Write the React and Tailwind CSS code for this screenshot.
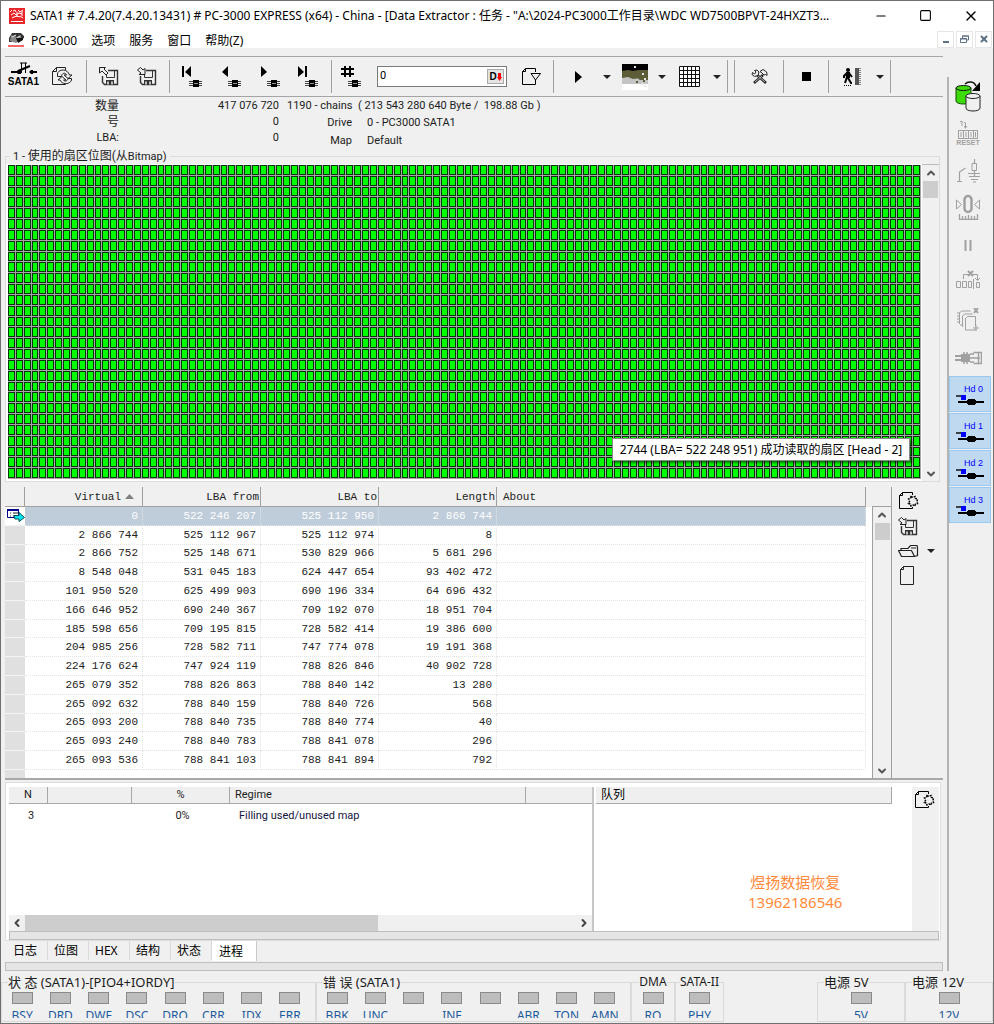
import { ChevronDown, ChevronLeft, ChevronRight, ChevronUp, Minus, Square, X } from "lucide-react";
import clsx from "clsx";

// =====================================================================
// Data
// =====================================================================
const MENU = ["PC-3000", "选项", "服务", "窗口", "帮助(Z)"];

const CHAINS = [
  ["0", "522 246 207", "525 112 950", "2 866 744"],
  ["2 866 744", "525 112 967", "525 112 974", "8"],
  ["2 866 752", "525 148 671", "530 829 966", "5 681 296"],
  ["8 548 048", "531 045 183", "624 447 654", "93 402 472"],
  ["101 950 520", "625 499 903", "690 196 334", "64 696 432"],
  ["166 646 952", "690 240 367", "709 192 070", "18 951 704"],
  ["185 598 656", "709 195 815", "728 582 414", "19 386 600"],
  ["204 985 256", "728 582 711", "747 774 078", "19 191 368"],
  ["224 176 624", "747 924 119", "788 826 846", "40 902 728"],
  ["265 079 352", "788 826 863", "788 840 142", "13 280"],
  ["265 092 632", "788 840 159", "788 840 726", "568"],
  ["265 093 200", "788 840 735", "788 840 774", "40"],
  ["265 093 240", "788 840 783", "788 841 078", "296"],
  ["265 093 536", "788 841 103", "788 841 894", "792"],
];

const TABS = ["日志", "位图", "HEX", "结构", "状态", "进程"];
const STATUS = ["BSY", "DRD", "DWF", "DSC", "DRQ", "CRR", "IDX", "ERR"];
const ERRORS = ["BBK", "UNC", "", "INF", "", "ABR", "TON", "AMN"];
const SECTORS = Array.from({ length: 116 * 29 }, (_, i) => i);

// =====================================================================
// Icons
// =====================================================================
function Icon({ w, h, children, className }) {
  return (
    <svg
      width={w}
      height={h}
      viewBox={`0 0 ${w} ${h}`}
      fill="none"
      stroke="currentColor"
      aria-hidden="true"
      className={clsx("shrink-0", className)}
    >
      {children}
    </svg>
  );
}

const Caret = () => (
  <Icon w={8} h={4}>
    <path d="M0 0h8L4 4z" fill="#222" stroke="none" />
  </Icon>
);

const AppLogo = () => (
  <Icon w={16} h={16}>
    <path d="M0 0h16v16H0z" fill="#e8262a" stroke="none" />
    <path d="M1 4l2-2M4 3l2-1 1 2M9 2l2 2 3-2M2 7l3-2 2 2 3-2 3 1M8 4v5M5 9l3-1 3 1M3 10l2-1M11 8l3 2M13 3v5" stroke="#fff" />
    <path d="M2 13.500h12" stroke="#fff" />
  </Icon>
);

const DocLogo = () => (
  <Icon w={16} h={15}>
    <path d="M1 6l3-5h9l3 3v2l-4 2-3-2-3 1-2 3H1z" fill="#333" stroke="none" />
    <path d="M3 3l6 2 4-2v4l-5 4-6-2z" fill="#888" stroke="none" />
    <path d="M4 5l4-2M9 6l3-2" stroke="#eee" />
    <path d="M8 6h7v2l-5 3z" fill="#111" stroke="none" />
    <path d="M0 14h16" stroke="#e33" strokeWidth="1.500" />
  </Icon>
);

const SataPort = () => (
  <Icon w={28} h={13}>
    <path d="M1 10h7M20 10h7M8 9L20 4" strokeWidth="2" />
    <path d="M11.500 1v10M15.500 1v10M10 1h7" />
    <path d="M6 10l2-2h3v4H8zM19 10l2-2h2v4h-2z" fill="currentColor" stroke="none" />
  </Icon>
);

// page with a folded corner and two arrows chasing each other
const Refresh = () => (
  <Icon w={21} h={19}>
    <path d="M13.500 3V.5h-9l-4 4v13h13V17M.5 4.500h4v-4" stroke="#222" />
    <path d="M5.500 9.500V7c0-4 8-6 11-1l1 2h2.500L16 11.500 12 8h2.500c-1-3-5-2-5 1.500z" fill="#f0f0f0" stroke="#222" />
    <path d="M19.500 11.500V13c-1 4-8 5-10.500 1.500L8 13H6l4-3.500 4 3.500h-2.500c1 1.500 4 1.500 4.500-1.500z" fill="#f0f0f0" stroke="#222" />
  </Icon>
);

const Floppy = () => (
  <g stroke="#333">
    <path d="M9 3.500h9.500v14H5.500l-2-2V9" strokeWidth="1.400" />
    <path d="M7.500 8v2.500h8V4" />
    <path d="M7 13h8v5H7z" fill="#333" stroke="none" />
    <path d="M9 17.500v-3M13 17.500v-3" stroke="#f0f0f0" strokeWidth="1.500" />
  </g>
);

const SaveUp = () => (
  <Icon w={20} h={19}>
    <Floppy />
    <path d="M.5 .5h6L5 2l4 4-2 2-4-4-2.500 2z" fill="#f0f0f0" stroke="#222" />
  </Icon>
);

const SaveDown = () => (
  <Icon w={20} h={19}>
    <Floppy />
    <path d="M.5 3l3-2.500L6 3l2-1.500v6H2L4 6z" fill="#f0f0f0" stroke="#222" />
  </Icon>
);

const STEP_SHAPES = {
  first: "M0 0h2v11H0zM9 0v11L3 6z",
  prev: "M7 0v11L1 6z",
  next: "M1 0v11l6-5z",
  last: "M0 0v11l6-5zM7 0h2v11H7z",
  jump: "M3 0h2v11H3zM8 0h2v11H8zM0 2h13v2H0zM0 7h13v2H0z",
};

function Step({ kind }) {
  return (
    <Icon w={22} h={22}>
      <path d={STEP_SHAPES[kind]} fill="currentColor" stroke="none" />
      <path d="M7 15.500h13M7 17.500h13M7 19.500h13" stroke="#444" />
      <path d="M11 14h6v7h-6z" fill="currentColor" stroke="none" />
      <path d="M12 17.500h4" stroke="#999" />
    </Icon>
  );
}

const PageDown = () => (
  <Icon w={21} h={19}>
    <path d="M14.500 5V1.500h-10l-3 3v13h13V13M1.500 4.500h3v-3" />
    <path d="M10 6.500h9.500L14.500 13z" fill="#f0f0f0" />
  </Icon>
);

const PlayMark = () => (
  <Icon w={7} h={12}>
    <path d="M0 0l7 6-7 6z" fill="currentColor" stroke="none" />
  </Icon>
);

const Landscape = () => (
  <Icon w={26} h={26}>
    <path d="M0 0h26v26H0z" fill="#fff" stroke="none" />
    <path d="M0 0h26v14H0z" fill="#000" stroke="none" />
    <path d="M0 7l6-1 5 1 6-1h9v9H0z" fill="#5d5d38" stroke="none" />
    <path d="M0 14l6-1 5 2 7-1 8 2v4H0z" fill="#c4c4c4" stroke="none" />
    <path d="M9 12l5 1 4 3h8v-4H13z" fill="#5d5d38" stroke="none" />
    <path d="M12 3h2M20 10h2M22 15h2M19 20h2M22 22h2" stroke="#e5e5e5" strokeWidth="2" />
    <path d="M14 18h2M21 17h2" stroke="#5d5d38" strokeWidth="2" />
  </Icon>
);

const GridMark = () => (
  <Icon w={21} h={21}>
    <path d="M0 0h21v21H0z" fill="#fff" stroke="none" />
    <path d="M.5 .5h20v20H.5zM4.500 0v21M8.500 0v21M12.500 0v21M16.500 0v21M0 4.500h21M0 8.500h21M0 12.500h21M0 16.500h21" stroke="#111" />
  </Icon>
);

const Tools = () => (
  <Icon w={17} h={16}>
    <path d="M5 5l10 9M12 6L3 14" stroke="#222" strokeWidth="2.600" />
    <path d="M6 6l8 7M11 7l-7 6" stroke="#ddd" strokeWidth=".8" />
    <path d="M3.500 1.500L5 3 3.500 5 1.500 3.500 1 5.500l2.500 2L7 6.500 8 3 6 1z" fill="#eee" stroke="#222" />
    <path d="M9 2.500l3-2 2.500 1.500 1.500 2v2.500l-1.500-1L13 6l-2-2z" fill="#eee" stroke="#222" />
  </Icon>
);

const StopMark = () => (
  <Icon w={9} h={9}>
    <path d="M0 0h9v9H0z" fill="currentColor" stroke="none" />
  </Icon>
);

const Exit = () => (
  <Icon w={20} h={19}>
    <circle cx="5" cy="3" r="2" fill="currentColor" stroke="none" />
    <path d="M3 5h4v6H3z" fill="currentColor" stroke="none" />
    <path d="M4 10l-2 6M5 11l3 5h1M4 6L1 9v2M6 6l3 4" strokeWidth="2" />
    <path d="M1 18.500h8" strokeDasharray="1 1" />
    <path d="M12 1h4v17h-4z" fill="#555" stroke="none" />
    <path d="M17 1v17" stroke="#888" strokeWidth="2" strokeDasharray="1 1" />
  </Icon>
);

const NewPage = () => (
  <Icon w={21} h={19}>
    <path d="M14.500 4V1.500h-10l-3 3v13h13V16M1.500 4.500h3v-3" />
    <path
      d="M13 5.500l2 1 2-1 .5 2 2 .5-.5 2.500 .5 2-2 .5-.5 2-2-1-2 1-.5-2-2-.5 1-2-1-2.500 2-.5z"
      strokeDasharray="2 1"
      strokeWidth="1.500"
      fill="#f0f0f0"
    />
  </Icon>
);

const Folder = () => (
  <Icon w={21} h={14}>
    <path d="M3.500 12.500l-3-6h13l3 6zM3 6V4.500h7l2.500-3H19l.5 2v8l-3 1" stroke="#222" strokeWidth="1.200" />
    <path d="M13 4h5" stroke="#222" />
  </Icon>
);

const BlankPage = () => (
  <Icon w={14} h={19}>
    <path d="M3.500 .5h10v18H.5v-15zM.5 3.500h3v-3" stroke="#222" />
  </Icon>
);

const Disks = () => (
  <Icon w={26} h={31}>
    <path d="M1 7v13c0 4 15 4 15 0V7" fill="#3edb0b" stroke="#124d00" />
    <ellipse cx="8.500" cy="7" rx="7.500" ry="2.500" fill="#3edb0b" stroke="#111" />
    <path d="M11 15v12c0 4 14 4 14 0V15" fill="#f0f0f0" stroke="#222" />
    <ellipse cx="18" cy="15" rx="7" ry="2.500" fill="#f0f0f0" stroke="#222" />
    <path d="M10 3c3-3 9-3 11 2" stroke="#111" strokeWidth="1.500" />
    <path d="M25 1v9h-8z" fill="#000" stroke="none" />
  </Icon>
);

const Counter = () => (
  <Icon w={22} h={19}>
    <path d="M3 2l2-1v5M8.500 2.500v6M7 6l1.500 2L10 6M8 2.500H7" />
    <path d="M1 10.500h20M1 18.500h20M1.500 10v9M6.500 10v9M11.500 10v9M16.500 10v9M20.500 10v9M4 12v5M9 12v5M14 12v5M18.500 12v5" />
  </Icon>
);

const PowerSwitch = () => (
  <Icon w={24} h={24}>
    <path d="M1 22.500h5M3.500 22v-9l6-4M12 14.500h12M18.500 0v4M18.500 11v6M13 17.500h11M15 20.500h7M17 23h3" strokeWidth="1.200" />
    <path d="M16 4.500h4.500v7H16z" />
  </Icon>
);

const ZeroCal = () => (
  <Icon w={24} h={26}>
    <path d="M.5 6v9l5-4.500zM23.500 6v9l-5-4.500z" />
    <rect x="8.500" y="2" width="7" height="16" rx="3.500" strokeWidth="2.500" />
    <path d="M3.500 20v5.500h18V20M6.500 22v3M9.500 22v3M12.500 21v4M15.500 22v3M18.500 22v3" strokeWidth="1.300" />
  </Icon>
);

const PauseMark = () => (
  <Icon w={8} h={11}>
    <path d="M1.500 0v11M6.500 0v11" strokeWidth="2" />
  </Icon>
);

const Blocks = () => (
  <Icon w={24} h={20}>
    <path d="M.5 11.500h4v6h-4zM6.500 11.500h4v6h-4zM12.500 11.500h3v6h-3zM17.500 9v10M20.500 12.500h3v5h-3z" />
    <path d="M7.500 9V4.500h14V10M19 8l2.500 2.500L24 8" />
    <path d="M12 1l5 5M17 1l-5 5" strokeWidth="2" />
  </Icon>
);

const PagesCross = () => (
  <Icon w={24} h={24}>
    <path d="M18 0l4 5M22 0l-4 5" strokeWidth="2" />
    <path d="M9.500 10.500l2-2h8v10M9.500 10v12h11M6.500 19V8l2-2h8M3.500 16V5l2-2h9M1 5h3M1 8h3M1 11h3M1 14h3M4 17h3M17 20h6M20 17v6" />
  </Icon>
);

const Connector = () => (
  <Icon w={27} h={14}>
    <path d="M0 5h10M0 9h10" strokeWidth="2" />
    <path d="M6 3h9v8H6z" fill="currentColor" stroke="none" />
    <path d="M9 1v12M12 1v12M15 3h4M15 7h10M15 11h4M18.500 1.500h8v11h-8M23.500 1v12" strokeWidth="1.500" />
  </Icon>
);

const HeadMark = () => (
  <Icon w={28} h={12}>
    <path d="M0 1h6v2" stroke="#111" strokeWidth="1.500" />
    <path d="M5 0h5v5H5z" fill="#00f" stroke="none" />
    <path d="M2 7h26" stroke="#000" strokeWidth="2" />
    <path d="M11 5h1V4h7v1h1v4h-1v1h-7V9h-1z" fill="#000" stroke="none" />
  </Icon>
);

// =====================================================================
// Toolbar parts
// =====================================================================
function ToolButton({ label, className = "w-[39px]", children }) {
  return (
    <button type="button" aria-label={label} className={clsx("flex shrink-0 items-center justify-center", className)}>
      {children}
    </button>
  );
}

const Divider = () => <div className="mx-[3px] my-[3px] w-px shrink-0 bg-[#a0a0a0]" />;

function Toolbar() {
  return (
    <div className="mt-2 mr-[4px] ml-1 flex h-[41px] items-stretch border-y border-[#a5a5a5] bg-[#f0f0f0] text-black">
      <button type="button" className="flex w-[37px] shrink-0 flex-col items-center pt-[5px] font-['Liberation_Sans'] text-[10px] leading-[13px] font-bold">
        <SataPort />
        SATA1
      </button>
      <ToolButton label="Reload" className="w-[41px]"><Refresh /></ToolButton>
      <Divider />
      <ToolButton label="Load" className="w-[37px]"><SaveUp /></ToolButton>
      <ToolButton label="Save"><SaveDown /></ToolButton>
      <Divider />
      <ToolButton label="First"><Step kind="first" /></ToolButton>
      <ToolButton label="Previous"><Step kind="prev" /></ToolButton>
      <ToolButton label="Next"><Step kind="next" /></ToolButton>
      <ToolButton label="Last" className="w-[38px]"><Step kind="last" /></ToolButton>
      <Divider />
      <ToolButton label="Go to" className="w-[34px]"><Step kind="jump" /></ToolButton>
      <div className="ml-[8px] flex h-[21px] w-[130px] shrink-0 items-center self-center border border-[#7a7a7a] bg-white">
        <input aria-label="Sector" defaultValue="0" className="w-full min-w-0 px-[2px] font-['Roboto'] text-[11px] outline-none" />
        <button type="button" className="mr-[2px] flex h-[15px] w-[17px] shrink-0 items-center justify-center border border-[#aaa] bg-[#e4e4e4] font-['Liberation_Sans'] text-[10px] leading-none font-bold">
          D
          <Icon w={5} h={8}>
            <path d="M1 0h3v4h1L2.500 8 0 4h1z" fill="#f00" stroke="none" />
          </Icon>
        </button>
      </div>
      <ToolButton label="Jump list" className="ml-[6px] w-[37px]"><PageDown /></ToolButton>
      <Divider />
      <ToolButton label="Start" className="w-[43px]"><PlayMark /></ToolButton>
      <ToolButton label="Start options" className="w-[14px]"><Caret /></ToolButton>
      <ToolButton label="View" className="w-[41px]"><Landscape /></ToolButton>
      <ToolButton label="View options" className="w-[14px]"><Caret /></ToolButton>
      <ToolButton label="Map" className="w-[41px]"><GridMark /></ToolButton>
      <ToolButton label="Map options" className="w-[14px]"><Caret /></ToolButton>
      <Divider />
      <Divider />
      <ToolButton label="Tools" className="w-[42px]"><Tools /></ToolButton>
      <Divider />
      <ToolButton label="Stop" className="w-[38px]"><StopMark /></ToolButton>
      <Divider />
      <ToolButton label="Exit" className="w-[41px]"><Exit /></ToolButton>
      <ToolButton label="Exit options" className="w-[14px]"><Caret /></ToolButton>
      <Divider />
    </div>
  );
}

function VScroll({ className }) {
  return (
    <div className={clsx("flex shrink-0 flex-col items-center bg-[#f0f0f0] text-[#555]", className)}>
      <ChevronUp size={12} strokeWidth={4} className="my-[2px]" />
      <div className="h-[17px] w-[15px] bg-[#cdcdcd]" />
      <ChevronDown size={12} strokeWidth={4} className="mt-auto mb-[1px]" />
    </div>
  );
}

// =====================================================================
// Window chrome
// =====================================================================
function TitleBar() {
  return (
    <header className="bg-white font-['Noto_Sans','Noto_Sans_CJK_SC',sans-serif] text-[12px] text-black">
      <div className="flex h-[29px] items-center pl-2">
        <AppLogo />
        <span className="ml-[5px] min-w-0 flex-1 truncate">
          SATA1 # 7.4.20(7.4.20.13431) # PC-3000 EXPRESS (x64) - China - [Data Extractor : 任务 - "A:\2024-PC3000工作目录\WDC WD7500BPVT-24HXZT3...
        </span>
        <button type="button" aria-label="Minimize" className="flex w-[45px] justify-center"><Minus size={14} strokeWidth={2} /></button>
        <button type="button" aria-label="Maximize" className="flex w-[45px] justify-center"><Square size={13} strokeWidth={2} /></button>
        <button type="button" aria-label="Close" className="flex w-[45px] justify-center"><X size={16} strokeWidth={2} /></button>
      </div>
      <div className="flex h-[18px] items-center pl-[7px]">
        <DocLogo />
        <nav className="ml-[7px] flex gap-[14px]">
          {MENU.map((item) => (
            <button key={item} type="button" className="pt-[3px] leading-[18px]">{item}</button>
          ))}
        </nav>
        <div className="mr-px ml-auto flex gap-[2px] text-[#5f7186]">
          <button type="button" aria-label="Minimize document" className="flex h-[17px] w-[17px] items-end justify-center border border-[#e6e6e6] pb-[4px]">
            <span className="h-[2px] w-[6px] bg-current" />
          </button>
          <button type="button" aria-label="Restore document" className="flex h-[17px] w-[17px] items-center justify-center border border-[#e6e6e6]">
            <Icon w={9} h={8}>
              <path d="M2.500 3V1h6v4H7M.5 3.500h6v4h-6zM2 1h7M0 4h7" />
            </Icon>
          </button>
          <button type="button" aria-label="Close document" className="flex h-[17px] w-[17px] items-center justify-center border border-[#e6e6e6]">
            <X size={10} strokeWidth={5} />
          </button>
        </div>
      </div>
    </header>
  );
}

function Info() {
  return (
    <div className="ml-1 flex h-[51px] pt-px text-[11px] leading-4 whitespace-pre">
      <div className="w-[114px] shrink-0 text-right">
        <p className="text-[12px]">数量</p>
        <p className="text-[12px]">号</p>
        <p>LBA:</p>
      </div>
      <div className="w-[160px] shrink-0 text-right">
        <p>417 076 720</p>
        <p>0</p>
        <p>0</p>
      </div>
      <div className="ml-[8px]">
        <p>1190 - chains  ( 213 543 280 640 Byte /  198.88 Gb )</p>
        <dl className="grid grid-cols-[65px_auto] gap-x-[15px] leading-[18px]">
          <dt className="text-right">Drive</dt>
          <dd>0 - PC3000 SATA1</dd>
          <dt className="text-right">Map</dt>
          <dd>Default</dd>
        </dl>
      </div>
    </div>
  );
}

function SectorMap() {
  return (
    <fieldset className="relative mr-[7px] ml-1 min-w-0 border border-[#dcdcdc]">
      <legend className="ml-[4px] h-4 px-[3px] text-[12px] leading-4">
        <span className="text-[11px]">1 - </span>使用的扇区位图(从<span className="text-[11px]">Bitmap)</span>
      </legend>
      <div className="flex h-[317px] bg-white pl-[2px]">
        <div className="mt-px grid h-[314px] min-w-0 flex-1 grid-cols-[repeat(116,minmax(0,1fr))] grid-rows-[repeat(29,minmax(0,1fr))] bg-[#aaa4aa]">
          {SECTORS.map((n) => (
            <div key={n} className="mr-px mb-px border border-[#053605] bg-[#00ff00]" />
          ))}
        </div>
        <VScroll className="ml-px w-[17px] border-t border-[#bbb]" />
      </div>
      <div className="absolute right-[29px] bottom-[20px] w-[298px] border border-[#888] bg-white text-center font-['Noto_Sans','Noto_Sans_CJK_SC',sans-serif] text-[12px] leading-[21px] whitespace-nowrap text-black shadow-[2px_2px_2px_rgba(0,0,0,0.5)]">
        2744 (LBA= 522 248 951) 成功读取的扇区 [Head - 2]
      </div>
    </fieldset>
  );
}

// =====================================================================
// Chain list
// =====================================================================
function ChainTable() {
  const head = "border-r border-b border-[#a0a0a0] bg-[#f0f0f0] font-normal";
  return (
    <table className="h-[283px] w-full table-fixed border-separate border-spacing-0 font-['Liberation_Mono',monospace] text-[11px] leading-[14px] text-[#222]">
      <colgroup>
        <col className="w-[20px]" />
        <col className="w-[118px]" />
        <col className="w-[118px]" />
        <col className="w-[118px]" />
        <col className="w-[118px]" />
        <col />
      </colgroup>
      <thead>
        <tr className="h-[20px]">
          <th aria-label="Marker" className={head} />
          <th className={clsx(head, "pr-[8px] text-right")}>
            Virtual
            <svg width="9" height="5" viewBox="0 0 9 5" className="ml-[4px] inline-block align-middle">
              <path d="M4.500 0L9 5H0z" fill="#808080" />
            </svg>
          </th>
          <th className={clsx(head, "pr-px text-right")}>LBA from</th>
          <th className={clsx(head, "pr-px text-right")}>LBA to</th>
          <th className={clsx(head, "pr-px text-right")}>Length</th>
          <th className={clsx(head, "pl-[6px] text-left")}>About</th>
        </tr>
      </thead>
      <tbody>
        {CHAINS.map((row, i) => (
          <tr key={row[1]} className={i === 0 ? "bg-[#bfccda] text-white" : "bg-white"}>
            <td className={clsx("border-b border-[#f4f4f4]", i === 0 ? "bg-white" : "bg-[#e0e0e0]")}>
              {i === 0 && (
                <Icon w={18} h={13} className="ml-[2px]">
                  <path d="M.5 .5h11v8H.5z" fill="#fff" stroke="#008" />
                  <path d="M0 1h12" stroke="#008" strokeWidth="2" />
                  <path d="M3 4h1M6 4h5M3 7h1M6 7h3" stroke="#222" />
                  <path d="M7 6.500h5V3.500l5.500 5-5.500 4V10H8z" fill="#00e5ef" stroke="#055" />
                </Icon>
              )}
            </td>
            {row.map((cell, c) => (
              <td key={c} className="border-r border-b border-dotted border-[#e4e4e4] pr-[4px] text-right">{cell}</td>
            ))}
            <td className="border-r border-b border-dotted border-[#e4e4e4]" />
          </tr>
        ))}
      </tbody>
    </table>
  );
}

function ChainPanel() {
  return (
    <section className="mt-[5px] mr-[4px] ml-1 flex h-[293px] border-b-2 border-[#a8a8a8]">
      <div className="min-w-0 flex-1 bg-[#f0f0f0]">
        <ChainTable />
        <div className="h-[8px] bg-white">
          <div className="h-full w-[20px] bg-[#e0e0e0]" />
        </div>
      </div>
      <div className="flex">
        <div className="mt-[20px] w-[6px] bg-white" />
        <VScroll className="mt-[19px] w-[19px] border-t border-l border-[#a0a0a0]" />
      </div>
      <div className="flex w-[52px] shrink-0 flex-col items-start gap-[7px] border-l border-[#a0a0a0] pt-[4px] pl-[6px] text-black">
        <button type="button" aria-label="New chain list"><NewPage /></button>
        <button type="button" aria-label="Save chain list"><SaveDown /></button>
        <div className="flex items-center gap-[8px] py-[1px]">
          <button type="button" aria-label="Open chain list"><Folder /></button>
          <button type="button" aria-label="Open options"><Caret /></button>
        </div>
        <button type="button" aria-label="Clear" className="ml-[2px]"><BlankPage /></button>
      </div>
    </section>
  );
}

// =====================================================================
// Process panel + tabs
// =====================================================================
function ProcessPanel() {
  const head = "border-r border-b border-[#a8a8a8] bg-[#efefef] font-normal";
  return (
    <section className="mt-[2px] mr-[6px] ml-1 border border-[#dedede] bg-white px-px pt-[4px]">
      <div className="relative flex h-[144px] pl-[2px]">
        <div className="flex w-[585px] shrink-0 flex-col border-r-2 border-[#c6c6c6]">
          <table className="w-full table-fixed border-separate border-spacing-0 text-[11px] leading-4">
            <colgroup>
              <col className="w-[39px]" />
              <col className="w-[84px]" />
              <col className="w-[98px]" />
              <col className="w-[296px]" />
              <col />
            </colgroup>
            <thead>
              <tr>
                <th className={head}>N</th>
                <th aria-label="State" className={head} />
                <th className={head}>%</th>
                <th className={clsx(head, "pl-[5px] text-left")}>Regime</th>
                <th aria-label="Extra" className="border-b border-[#a8a8a8] bg-[#efefef]" />
              </tr>
            </thead>
            <tbody className="leading-[24px]">
              <tr>
                <td className="pl-[5px] text-center">3</td>
                <td />
                <td className="pl-[3px] text-center">0%</td>
                <td colSpan={2} className="pl-[9px] text-[#14143c]">Filling used/unused map</td>
              </tr>
            </tbody>
          </table>
          <div className="mt-auto flex h-[16px] items-center bg-[#f0f0f0] text-[#444]">
            <ChevronLeft size={12} strokeWidth={4} className="mx-[2px]" />
            <div className="h-full w-[353px] bg-[#cdcdcd]" />
            <ChevronRight size={12} strokeWidth={4} className="mr-[2px] ml-auto" />
          </div>
        </div>
        <div className="relative flex min-w-0 flex-1 pl-[2px]">
          <div className="min-w-0 flex-1">
            <div className="mr-[20px] border-r border-b border-[#a8a8a8] bg-[#efefef] pl-[5px] text-[12px] leading-4 text-black">队列</div>
            <p className="absolute top-[87px] left-[154px] text-center text-[15px] leading-[19px] text-[#ff8a3c]">
              煜扬数据恢复
              <br />
              <span className="font-['Noto_Sans']">13962186546</span>
            </p>
          </div>
          <div className="w-[27px] bg-[#f0f0f0] pt-[3px] pl-[2px] text-black">
            <button type="button" aria-label="New queue"><NewPage /></button>
          </div>
        </div>
      </div>
      <div className="ml-[2px] h-[9px] border border-[#bebebe] bg-[#e5e5e5]" />
    </section>
  );
}

function Tabs() {
  return (
    <div className="ml-[6px] flex h-[21px] items-start font-['Noto_Sans','Noto_Sans_CJK_SC',sans-serif] text-[12px] text-black">
      {TABS.map((tab, i) => (
        <button
          key={tab}
          type="button"
          className={clsx(
            "border-r text-left leading-[18px]",
            i === 5 ? "h-[20px] w-[45px] border-[#c8c8c8] bg-white pt-px pl-[7px]" : "h-[19px] w-[41px] border-[#dadada] pl-[6px]",
          )}
        >
          {tab}
        </button>
      ))}
    </div>
  );
}

// =====================================================================
// Right rail
// =====================================================================
function Rail() {
  return (
    <aside className="mt-[29px] w-[46px] shrink-0 border-l-2 border-[#b4b4b4] text-[#a0a0a0]">
      <div className="flex w-[38px] flex-col items-center">
        <button type="button" aria-label="Switch drive" className="mt-[2px] flex h-[35px] items-center"><Disks /></button>
        <button type="button" className="mt-[6px] flex h-[28px] flex-col items-center font-['Liberation_Sans'] text-[7px] leading-[8px] font-bold">
          <Counter />
          RESET
        </button>
        <button type="button" aria-label="Power" className="mt-[8px] flex h-[30px] items-center"><PowerSwitch /></button>
        <button type="button" aria-label="Recalibrate" className="mt-[5px] flex h-[32px] items-center"><ZeroCal /></button>
        <button type="button" aria-label="Pause" className="mt-[8px] flex h-[28px] items-center"><PauseMark /></button>
        <button type="button" aria-label="Skip blocks" className="mt-[9px] flex h-[24px] items-center"><Blocks /></button>
        <button type="button" aria-label="Clear pages" className="mt-[15px] flex h-[26px] items-center"><PagesCross /></button>
        <button type="button" aria-label="Connector" className="mt-[15px] flex h-[20px] items-center"><Connector /></button>
      </div>
      <div className="mt-[8px] flex w-[42px] flex-col gap-[1px]">
        {[0, 1, 2, 3].map((n) => (
          <button
            key={n}
            type="button"
            className="flex h-[36px] flex-col items-center border border-[#99c9ef] bg-[#bfdaf0] pt-[6px] font-['Liberation_Sans'] text-[9px] leading-[12px] text-[#00f]"
          >
            <span className="pl-[7px]">Hd {n}</span>
            <HeadMark />
          </button>
        ))}
      </div>
    </aside>
  );
}

// =====================================================================
// Status lights
// =====================================================================
function Light({ label }) {
  return (
    <div className="flex flex-col items-center">
      <span className="h-[12px] w-[21px] border border-[#8a8a8a] bg-[#bdbdbd]" />
      <span className="mt-[5px] h-[9px] overflow-hidden text-[12px] leading-[14px] text-[#1d5a9c]">{label}</span>
    </div>
  );
}

function LightGroup({ title, lights, className, legendClass = "ml-[6px] text-[13px]" }) {
  return (
    <fieldset className={clsx("h-[49px] min-w-0 shrink-0 border border-[#dadada]", className)}>
      <legend className={clsx("h-[18px] leading-[18px] whitespace-nowrap", legendClass)}>{title}</legend>
      <div className={clsx("mt-px grid", lights.length > 1 ? "mr-[6px] ml-px grid-cols-8" : "grid-cols-1")}>
        {lights.map((label, i) => (
          <Light key={i} label={label} />
        ))}
      </div>
    </fieldset>
  );
}

export default function App() {
  return (
    <div className="flex min-h-screen flex-col border border-[#707070] bg-[#f0f0f0] font-['Roboto','Noto_Sans_CJK_SC',sans-serif] text-[#1c1c1c]">
      <TitleBar />
      <div className="flex">
        <main className="min-w-0 flex-1">
          <Toolbar />
          <Info />
          <SectorMap />
          <ChainPanel />
          <ProcessPanel />
          <Tabs />
          <div className="mr-[4px] ml-1 h-[9px] border border-[#bebebe] bg-[#e5e5e5]" />
        </main>
        <Rail />
      </div>
      <footer className="mt-[2px] flex font-['Noto_Sans','Noto_Sans_CJK_SC',sans-serif]">
        <LightGroup title="状 态 (SATA1)-[PIO4+IORDY]" lights={STATUS} className="w-[315px]" />
        <LightGroup title="错 误 (SATA1)" lights={ERRORS} className="w-[315px]" />
        <LightGroup title="DMA" lights={["RQ"]} className="w-[44px]" legendClass="mx-auto text-[12px]" />
        <LightGroup title="SATA-II" lights={["PHY"]} className="w-[49px]" legendClass="mx-auto text-[12px]" />
        <LightGroup title="电源 5V" lights={["5V"]} className="ml-auto w-[88px]" />
        <LightGroup title="电源 12V" lights={["12V"]} className="w-[88px]" />
      </footer>
    </div>
  );
}
